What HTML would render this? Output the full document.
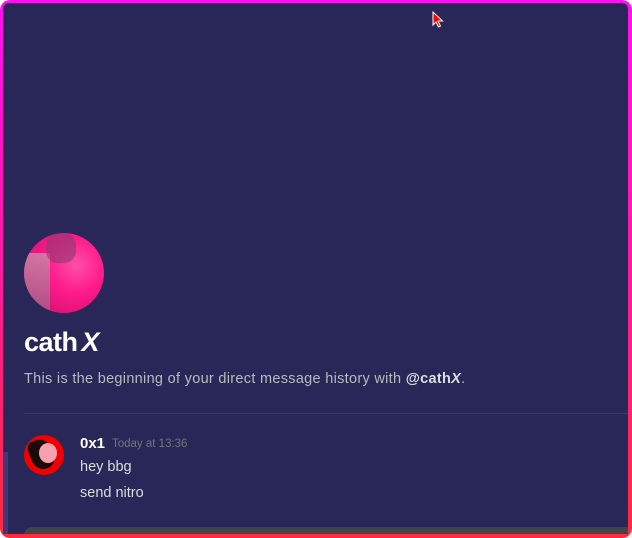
<!DOCTYPE html>
<html><head><meta charset="utf-8"><style>
html,body{margin:0;padding:0;width:632px;height:538px;overflow:hidden;background:#fff;}
.frame{position:absolute;left:0;top:0;width:632px;height:538px;border-radius:10px;background:linear-gradient(180deg,#ff10f0 0%,#ff1aa0 50%,#ff2a3a 100%);}
.inner{position:absolute;left:3px;top:3px;width:625px;height:531px;background:#282757;border-radius:6px 6px 0 0;overflow:hidden;font-family:"Liberation Sans",sans-serif;}
.strip{position:absolute;left:0;top:449px;width:5px;height:90px;background:#3b3a7a;}
.av{position:absolute;left:21px;top:230px;width:80px;height:80px;border-radius:50%;overflow:hidden;background:radial-gradient(circle at 65% 40%,#ff4fa8 0%,#ff1a8a 40%,#e01478 70%,#b0306a 100%);}
.av:before{content:"";position:absolute;left:0;top:20px;width:26px;height:60px;background:linear-gradient(180deg,#c98cab,#a85a88);opacity:.8;}
.av:after{content:"";position:absolute;left:22px;top:0;width:30px;height:30px;background:#8a3a70;opacity:.6;border-radius:40%;}
.name{position:absolute;left:21px;top:324px;color:#fff;font-weight:bold;font-size:27px;letter-spacing:-0.5px;}
.desc{position:absolute;left:21px;top:368px;color:#b9bbbe;font-size:14.5px;letter-spacing:0.3px;}
.desc b{color:#dcddde;}
.hr{position:absolute;left:21px;top:410px;width:604px;height:1px;background:#3a3a6c;}
.av2{position:absolute;left:21px;top:432px;width:40px;height:40px;border-radius:50%;background:#f00000;overflow:hidden;}
.av2:before{content:"";position:absolute;left:6px;top:4px;width:24px;height:30px;background:#1a0a0a;border-radius:30% 60% 50% 50%;transform:rotate(-20deg);}
.av2:after{content:"";position:absolute;left:15px;top:8px;width:18px;height:20px;background:#f7a0b0;border-radius:50%;}
.u{position:absolute;left:77px;top:432px;color:#fff;font-size:15px;font-weight:bold;}
.t{position:absolute;left:109px;top:435px;color:#72767d;font-size:11.5px;}
.m1{position:absolute;left:77px;top:456px;color:#dcddde;font-size:14.5px;}
.m2{position:absolute;left:77px;top:482px;color:#dcddde;font-size:14.5px;}
.input{position:absolute;left:21px;top:524px;width:610px;height:20px;background:#40444b;border-radius:8px;}
</style></head><body>
<div class="frame"></div>
<div class="inner">
<div class="strip"></div>
<div class="av"></div>
<div class="name">cath<span style="font-style:italic;margin-left:4px">X</span></div>
<div class="desc">This is the beginning of your direct message history with <b>@cath<i>X</i></b>.</div>
<div class="hr"></div>
<div class="av2"></div>
<div class="u">0x1</div>
<div class="t">Today at 13:36</div>
<div class="m1">hey bbg</div>
<div class="m2">send nitro</div>
<div class="input"></div>
</div>
<svg style="position:absolute;left:432px;top:11px" width="12" height="18" viewBox="0 0 12 18"><path d="M1 1 L1 14 L4 11 L6.5 16 L8.5 15 L6 10 L10.5 10 Z" fill="#f00" stroke="#fff" stroke-width="1"/></svg>
</body></html>
